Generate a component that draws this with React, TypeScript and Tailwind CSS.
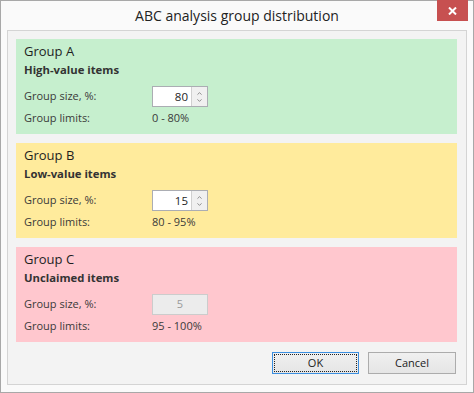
import { ChevronUp, ChevronDown } from "lucide-react"

const groups = [
  { name: "Group A", desc: "High-value items", size: "80", limits: "0 - 80%", bg: "bg-[#c6efce]", enabled: true },
  { name: "Group B", desc: "Low-value items", size: "15", limits: "80 - 95%", bg: "bg-[#ffeb9c]", enabled: true },
  { name: "Group C", desc: "Unclaimed items", size: "5", limits: "95 - 100%", bg: "bg-[#ffc7ce]", enabled: false },
]

function SizeInput({ value, enabled }: { value: string; enabled: boolean }) {
  if (!enabled) {
    return (
      <div className="w-[56px] h-[21px] border border-[#cccccc] bg-[#ececec] flex items-center justify-center text-[11px] text-[#9a9a9a]">
        {value}
      </div>
    )
  }
  return (
    <div className="w-[56px] h-[21px] border border-[#abadb3] bg-white flex">
      <div className="flex-1 flex items-center justify-end pr-[3px] text-[11.5px] text-[#1e1e1e]">{value}</div>
      <div className="w-[16px] border-l border-[#d0d0d0] bg-[#f0f0f0] flex flex-col items-center justify-center">
        <ChevronUp className="w-[9px] h-[7px] text-[#6a6a6a]" strokeWidth={2.5} />
        <ChevronDown className="w-[9px] h-[7px] text-[#6a6a6a]" strokeWidth={2.5} />
      </div>
    </div>
  )
}

export default function App() {
  return (
    <div
      className="w-[474px] h-[393px] border border-[#a8a8a8] bg-[#fafafa] flex flex-col"
      style={{ fontFamily: '"Open Sans", "Noto Sans", sans-serif' }}
    >
      {/* title bar */}
      <div className="h-[29px] flex items-start relative">
        <div className="flex-1 h-full flex items-center justify-center text-[14px] text-[#222]">
          ABC analysis group distribution
        </div>
        <div className="absolute right-[5px] top-[-1px] w-[31px] h-[21px] bg-[#c75050] flex items-center justify-center">
          <svg width="9" height="8" viewBox="0 0 9 8">
            <path d="M1 0.5 L8 7.5 M8 0.5 L1 7.5" stroke="white" strokeWidth="2" />
          </svg>
        </div>
      </div>

      {/* client area */}
      <div className="mx-[6px] h-[355px] border border-[#d4d4d4] bg-[#f3f3f3] pt-[8px] pl-[8px] pr-[9px] flex flex-col">
        <div className="flex flex-col gap-[9px]">
          {groups.map((g) => (
            <div key={g.name} className={`${g.bg} h-[95px] pl-[8px] pt-[4px] flex flex-col`}>
              <div className="text-[13px] leading-[17px] text-[#1e1e1e]">{g.name}</div>
              <div className="mt-[2px] text-[11.3px] leading-[16px] font-bold text-[#333]">{g.desc}</div>
              <div className="mt-[8px] flex items-center h-[21px] text-[11px] text-[#3a3a3a]">
                <div className="w-[128px]">Group size, %:</div>
                <SizeInput value={g.size} enabled={g.enabled} />
              </div>
              <div className="mt-[3px] flex items-center h-[16px] text-[11px] text-[#3a3a3a]">
                <div className="w-[128px]">Group limits:</div>
                <div>{g.limits}</div>
              </div>
            </div>
          ))}
        </div>
        <div className="mt-[10px] flex justify-end gap-[9px] pr-[1px]">
          <div className="w-[87px] h-[22px] border border-[#3c8fe0] bg-gradient-to-b from-[#f0f0f0] to-[#e5e5e5] p-[1px]">
            <div className="w-full h-full border border-dotted border-[#222] flex items-center justify-center text-[11px] text-[#222]">
              OK
            </div>
          </div>
          <div className="w-[88px] h-[22px] border border-[#acacac] bg-gradient-to-b from-[#f0f0f0] to-[#e5e5e5] flex items-center justify-center text-[11px] text-[#222]">
            Cancel
          </div>
        </div>
      </div>
    </div>
  )
}
